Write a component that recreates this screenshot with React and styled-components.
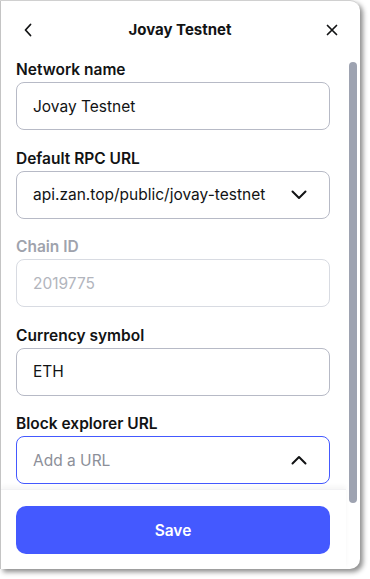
import React from "react";
import styled, { createGlobalStyle } from "styled-components";

const GlobalStyle = createGlobalStyle`
  html, body {
    margin: 0;
    padding: 0;
    background: #ffffff;
    font-family: "Inter", "Noto Sans", sans-serif;
    color: #121314;
  }
`;

const Page = styled.div`
  width: 370px;
  height: 579px;
  overflow: hidden;
`;

const Panel = styled.div`
  width: 360px;
  height: 569px;
  box-sizing: border-box;
  background: #ffffff;
  border-left: 1px solid #c4c4c4;
  border-top: 1px solid #d0d0d0;
  border-radius: 0 10px 10px 0;
  box-shadow: 3px 3px 5px rgba(0, 0, 0, 0.45);
  display: flex;
  flex-direction: column;
  overflow: hidden;
`;

const Header = styled.header`
  height: 57px;
  flex-shrink: 0;
  display: flex;
  align-items: center;
  justify-content: space-between;
  padding: 0 20px 0 19px;
`;

const Title = styled.h1`
  margin: 0;
  font-size: 15px;
  font-weight: 700;
  color: #121314;
`;

const IconButton = styled.button`
  width: 16px;
  height: 16px;
  padding: 0;
  border: none;
  background: none;
  display: flex;
  align-items: center;
  justify-content: center;
  color: #121314;
`;

const Body = styled.div`
  flex: 1;
  min-height: 0;
  display: flex;
`;

const Main = styled.div`
  flex: 1;
  min-width: 0;
  display: flex;
  flex-direction: column;
`;

const Scroll = styled.div`
  flex: 1;
  min-height: 0;
  overflow: hidden;
  display: flex;
  flex-direction: column;
  gap: 16.5px;
  padding: 0 15px 0 15px;
`;

const Gutter = styled.div`
  width: 15px;
  flex-shrink: 0;
  padding: 4px 3px 0 4px;
  box-sizing: border-box;
`;

const Thumb = styled.div`
  width: 8px;
  height: 441px;
  border-radius: 4px;
  background: #9ea3b1;
`;

const Field = styled.div`
  display: flex;
  flex-direction: column;
  flex-shrink: 0;
`;

const Label = styled.label`
  font-size: 15.5px;
  line-height: 24px;
  font-weight: 600;
  color: ${({ $disabled }) => ($disabled ? "#9fa3ad" : "#121314")};
`;

const InputBox = styled.div`
  height: 48px;
  box-sizing: border-box;
  border: 1px solid
    ${({ $state }) =>
      $state === "focus" ? "#4459ff" : $state === "disabled" ? "#d8dbe2" : "#b7bac6"};
  border-radius: 8px;
  display: flex;
  align-items: center;
  justify-content: space-between;
  padding: 0 22px 0 16px;
`;

const Value = styled.span`
  font-size: 15.5px;
  color: ${({ $muted }) => ($muted ? "#b2b5bd" : "#121314")};
  white-space: nowrap;
`;

const Placeholder = styled.span`
  font-size: 15.5px;
  color: #8c8f99;
`;

const Footer = styled.div`
  flex-shrink: 0;
  padding: 16px 16px 15px 15px;
  margin-right: -1px;
  box-shadow: 0 -3px 4px rgba(0, 0, 0, 0.04);
  border-top: 1px solid #f2f2f4;
`;

const SaveButton = styled.button`
  width: 100%;
  height: 48px;
  border: none;
  border-radius: 10px;
  background: #4459ff;
  color: #ffffff;
  font-family: inherit;
  font-size: 15.5px;
  font-weight: 600;
`;

const Chevron = ({ up }) => (
  <svg width="16" height="10" viewBox="0 0 16 10" fill="none">
    <path
      d={up ? "M1.5 8.5 L8 2 L14.5 8.5" : "M1.5 1.5 L8 8 L14.5 1.5"}
      stroke="#121314"
      strokeWidth="2"
      strokeLinecap="round"
      strokeLinejoin="round"
    />
  </svg>
);

const BackIcon = () => (
  <svg width="10" height="14" viewBox="0 0 10 14" fill="none">
    <path d="M7.5 1.5 L2.5 7 L7.5 12.5" stroke="#121314" strokeWidth="1.8" strokeLinecap="round" strokeLinejoin="round" />
  </svg>
);

const CloseIcon = () => (
  <svg width="12" height="12" viewBox="0 0 12 12" fill="none">
    <path d="M1.5 1.5 L10.5 10.5 M10.5 1.5 L1.5 10.5" stroke="#121314" strokeWidth="1.7" strokeLinecap="round" />
  </svg>
);

const fields = [
  { label: "Network name", value: "Jovay Testnet" },
  { label: "Default RPC URL", value: "api.zan.top/public/jovay-testnet", chevron: "down" },
  { label: "Chain ID", value: "2019775", disabled: true },
  { label: "Currency symbol", value: "ETH" },
  { label: "Block explorer URL", placeholder: "Add a URL", chevron: "up", focus: true },
];

export default function App() {
  return (
    <>
      <GlobalStyle />
      <Page>
        <Panel>
          <Header>
            <IconButton aria-label="Back">
              <BackIcon />
            </IconButton>
            <Title>Jovay Testnet</Title>
            <IconButton aria-label="Close">
              <CloseIcon />
            </IconButton>
          </Header>
          <Body>
            <Main>
              <Scroll>
                {fields.map((f) => (
                  <Field key={f.label}>
                    <Label $disabled={f.disabled}>{f.label}</Label>
                    <InputBox $state={f.focus ? "focus" : f.disabled ? "disabled" : "default"}>
                      {f.placeholder ? (
                        <Placeholder>{f.placeholder}</Placeholder>
                      ) : (
                        <Value $muted={f.disabled}>{f.value}</Value>
                      )}
                      {f.chevron && <Chevron up={f.chevron === "up"} />}
                    </InputBox>
                  </Field>
                ))}
              </Scroll>
              <Footer>
                <SaveButton>Save</SaveButton>
              </Footer>
            </Main>
            <Gutter>
              <Thumb />
            </Gutter>
          </Body>
        </Panel>
      </Page>
    </>
  );
}
